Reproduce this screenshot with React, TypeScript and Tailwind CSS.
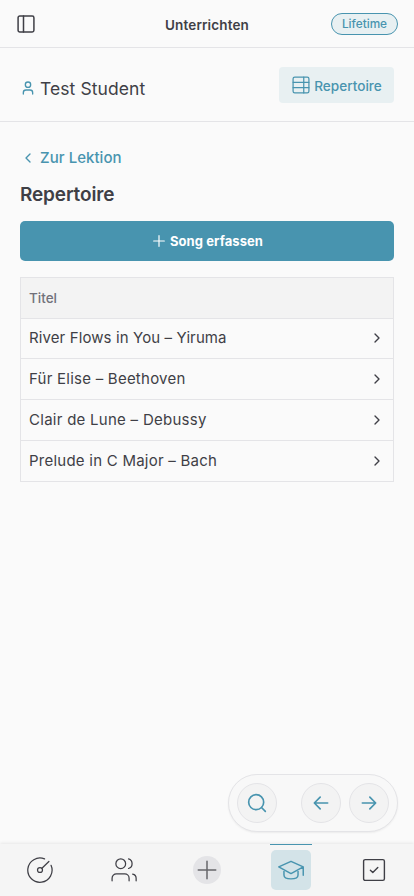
import type { ReactNode } from "react";

const songs = [
  { title: "River Flows in You – Yiruma", fit: "tracking-[0.11px]", height: "h-10 pb-px" },
  { title: "Für Elise – Beethoven", fit: "tracking-[0.24px]", height: "h-[41px]" },
  { title: "Clair de Lune – Debussy", fit: "tracking-[0.27px]", height: "h-[41px]" },
  { title: "Prelude in C Major – Bach", fit: "tracking-[0.24px]", height: "h-[41px]" },
];

function Icon({ className, weight = 1.5, children }: { className: string; weight?: number; children: ReactNode }) {
  return (
    <svg
      viewBox="0 0 24 24"
      fill="none"
      stroke="currentColor"
      strokeWidth={weight}
      strokeLinecap="round"
      strokeLinejoin="round"
      className={`shrink-0 ${className}`}
    >
      {children}
    </svg>
  );
}

function RoundButton({ label, className = "", children }: { label: string; className?: string; children: ReactNode }) {
  return (
    <button
      aria-label={label}
      className={`flex size-10 items-center justify-center rounded-full border border-[#e4e4e7] bg-[#f3f3f3] ${className}`}
    >
      {children}
    </button>
  );
}

export default function App() {
  return (
    <div className="flex h-[896px] w-full flex-col overflow-hidden bg-[#fafafa] font-['Inter','Liberation_Sans',sans-serif] text-[#3f3f46]">
      <header className="grid h-12 shrink-0 grid-cols-[1fr_auto_1fr] items-center border-b border-[#e4e4e7] px-4">
        <Icon className="size-5" weight={1.8}>
          <rect x="2.5" y="2.5" width="19" height="19" rx="2" />
          <path d="M9 2.5v19" />
        </Icon>
        <h1 className="pt-0.5 text-[13.5px] leading-5 font-semibold tracking-[0.13px]">Unterrichten</h1>
        <span className="flex h-[22px] w-[67px] items-center justify-center justify-self-end rounded-full border border-[#4894af] bg-[#e8f0f2] pt-px text-[11.8px] leading-4 font-medium text-[#4894af]">
          Lifetime
        </span>
      </header>

      <section className="flex h-[74px] shrink-0 items-center justify-between border-b border-[#e4e4e7] px-5">
        <div className="flex items-center gap-1 pt-1.5">
          <Icon className="size-4 text-[#4894af]" weight={2}>
            <circle cx="12" cy="7" r="4" />
            <path d="M19 21v-2a4 4 0 0 0-4-4H9a4 4 0 0 0-4 4v2" />
          </Icon>
          <span className="pt-0.5 text-[17.5px] leading-7 tracking-[0.08px]">Test Student</span>
        </div>
        <button className="mt-px flex h-9 w-[115px] items-center justify-center gap-[3px] rounded-[4px] bg-[#e8f0f2] text-[13.6px] font-medium text-[#4894af]">
          <Icon className="size-5">
            <rect x="2.5" y="2.5" width="19" height="19" rx="2" />
            <path d="M2.5 8.8h19M2.5 15.2h19M15.3 2.5v19" />
          </Icon>
          <span className="pt-0.5">Repertoire</span>
        </button>
      </section>

      <main className="flex flex-1 flex-col px-5 pt-6">
        <a className="flex h-6 items-center gap-1 text-[15px] font-medium tracking-[0.05px] text-[#4894af]">
          <Icon className="size-4" weight={2}>
            <path d="m15 18-6-6 6-6" />
          </Icon>
          <span>Zur Lektion</span>
        </a>
        <h2 className="mt-[11px] h-7 text-[19px] leading-7 font-semibold tracking-[-0.15px]">Repertoire</h2>
        <button className="mt-3 flex h-10 shrink-0 items-center justify-center gap-[3px] rounded-[5px] bg-[#4894af] text-[13px] font-bold tracking-[0.08px] text-white">
          <Icon className="size-4" weight={1.8}>
            <path d="M4 12h16M12 4v16" />
          </Icon>
          <span className="pt-0.5">Song erfassen</span>
        </button>

        <div className="mt-4 border border-[#e4e4e7]">
          <div className="flex h-10 items-center bg-[#f3f3f3] px-2 text-[13.5px] font-medium text-[#71717a]">
            <span>Titel</span>
          </div>
          {songs.map((song) => (
            <div key={song.title} className={`flex items-center justify-between border-t border-[#e4e4e7] px-2 ${song.height}`}>
              <span className={`text-[15px] leading-6 ${song.fit}`}>{song.title}</span>
              <Icon className="size-4" weight={2}>
                <path d="m9 18 6-6-6-6" />
              </Icon>
            </div>
          ))}
        </div>
      </main>

      <div className="mr-4 mb-3 flex h-[58px] w-[170px] shrink-0 items-center self-end rounded-full border border-[#e4e4e7] bg-[#f8f8f8] px-2 text-[#4894af] shadow-[0_1px_2px_rgba(0,0,0,0.06)]">
        <RoundButton label="Suchen">
          <Icon className="size-5" weight={2}>
            <circle cx="11" cy="11" r="9" />
            <path d="m18 18 4 4" />
          </Icon>
        </RoundButton>
        <RoundButton label="Zurück" className="ml-6">
          <Icon className="size-5" weight={2}>
            <path d="M20 12H4M11 5l-7 7 7 7" />
          </Icon>
        </RoundButton>
        <RoundButton label="Weiter" className="ml-2">
          <Icon className="size-5" weight={2}>
            <path d="M4 12h16M13 5l7 7-7 7" />
          </Icon>
        </RoundButton>
      </div>

      <nav className="flex h-[52px] shrink-0 justify-between bg-[#f5f5f5] px-[19px] shadow-[0_-1px_3px_rgba(0,0,0,0.08)]">
        <div className="flex w-[42px] items-center justify-center">
          <Icon className="size-[26px]" weight={1.15}>
            <path d="M16.2 1.8A11.2 11.2 0 1 0 22.2 7.7M20.2 4.1l-6.4 6.3" />
            <circle cx="12" cy="12" r="2.3" />
          </Icon>
        </div>
        <div className="flex w-[42px] items-center justify-center">
          <Icon className="size-[26px]" weight={1.15}>
            <circle cx="9" cy="6.2" r="4.5" />
            <path d="M1 22v-2.4a4 4 0 0 1 4-4h7.7a4 4 0 0 1 4 4V22M16.2 1.8a4.6 4.6 0 0 1 0 8.8M20 15.8a4 4 0 0 1 3.2 3.9V22" />
          </Icon>
        </div>
        <div className="flex w-[42px] items-center justify-center">
          <span className="flex size-7 items-center justify-center rounded-full bg-[#e4e4e7] text-[#66666b]">
            <Icon className="size-5" weight={1.8}>
              <path d="M1.5 12h21M12 1.5v21" />
            </Icon>
          </span>
        </div>
        <div className="flex w-[42px] items-center justify-center border-t border-[#4894af] pb-px">
          <span className="flex size-10 items-center justify-center rounded-[5px] bg-[#d3e3e8] text-[#4894af]">
            <Icon className="size-[26px]" weight={1.35}>
              <path d="M.7 9.1 12 4l11.3 5.1L12 15.3.7 9.1Zm4.8 2.7v4.8c0 2.2 2.8 3.6 6.5 3.6s6.5-1.4 6.5-3.6v-4.8M23.3 9.1v7.7" />
            </Icon>
          </span>
        </div>
        <div className="flex w-[42px] items-center justify-center">
          <Icon className="size-6" weight={1.4}>
            <rect x="1.6" y="1.6" width="20.8" height="20.8" rx="1.6" />
            <path d="m8.4 12.3 2.4 2.3 5-5" />
          </Icon>
        </div>
      </nav>
    </div>
  );
}
